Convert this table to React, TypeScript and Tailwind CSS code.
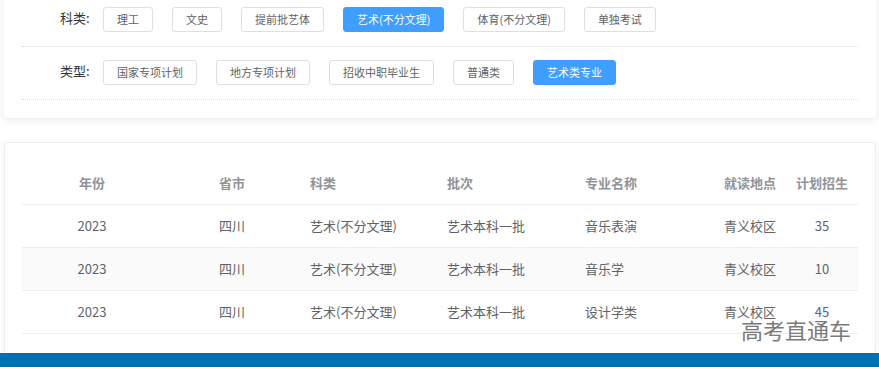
// Plan table page: filter card (subject / plan type) above a striped
// enrolment table, with the site footer strip peeking in at the bottom.

const SUBJECTS = ['理工', '文史', '提前批艺体', '艺术(不分文理)', '体育(不分文理)', '单独考试'];
const PLAN_TYPES = ['国家专项计划', '地方专项计划', '招收中职毕业生', '普通类', '艺术类专业'];

const ROWS = [
  { year: '2023', prov: '四川', subject: '艺术(不分文理)', batch: '艺术本科一批', major: '音乐表演', campus: '青义校区', plan: '35' },
  { year: '2023', prov: '四川', subject: '艺术(不分文理)', batch: '艺术本科一批', major: '音乐学', campus: '青义校区', plan: '10' },
  { year: '2023', prov: '四川', subject: '艺术(不分文理)', batch: '艺术本科一批', major: '设计学类', campus: '青义校区', plan: '45' },
];

const COLS = 'grid grid-cols-[187px_91px_137px_138px_139px_72px_72px]';

function FilterRow({ label, items, active }: { label: string; items: string[]; active: string }) {
  return (
    <div className="flex items-start border-b border-dotted border-[#dcdcdc] pt-[13px] pb-[14px]">
      <div className="w-[81px] flex-none pl-[38px] pt-[1px] text-[13px] leading-[20px] text-[#333]">{label}:</div>
      <div className="flex flex-wrap gap-[19px]">
        {items.map((it) => (
          <button
            key={it}
            className={
              it === active
                ? 'h-[25px] rounded-[3px] border border-[#409eff] bg-[#409eff] px-[13px] text-[11px] leading-[23px] text-white'
                : 'h-[25px] rounded-[3px] border border-[#dcdfe6] bg-white px-[13px] text-[11px] leading-[23px] text-[#606266]'
            }
          >
            {it}
          </button>
        ))}
      </div>
    </div>
  );
}

export default function App() {
  return (
    <div
      className="relative h-[367px] overflow-hidden bg-white"
      style={{ fontFamily: '"Noto Sans CJK SC", "Noto Sans", sans-serif' }}
    >
      {/* filter card — its top sits above the visible area */}
      <div className="mx-[4px] mr-[3px] -mt-[6px] rounded-b-[4px] bg-white px-[18px] pb-[18px] shadow-[0_2px_10px_rgba(0,0,0,0.09)]">
        <FilterRow label="科类" items={SUBJECTS} active="艺术(不分文理)" />
        <FilterRow label="类型" items={PLAN_TYPES} active="艺术类专业" />
      </div>

      {/* table card */}
      <div className="mx-[4px] mr-[3px] mt-[24px] h-[211px] rounded-t-[4px] border border-b-0 border-[#ebeef5] bg-white px-[17px] pt-[18px] shadow-[0_2px_10px_rgba(0,0,0,0.06)]">
        <div className={`${COLS} h-[44px] items-center border-b border-[#ebeef5] text-[13px] font-bold text-[#909399]`}>
          <div className="pr-[47px] text-center">年份</div>
          <div className="pl-[10px]">省市</div>
          <div className="pl-[10px]">科类</div>
          <div className="pl-[10px]">批次</div>
          <div className="pl-[10px]">专业名称</div>
          <div className="pl-[10px]">就读地点</div>
          <div className="text-center">计划招生</div>
        </div>
        {ROWS.map((r, i) => (
          <div
            key={i}
            className={`${COLS} h-[43px] items-center border-b border-[#ebeef5] text-[13px] text-[#606266] ${i % 2 === 1 ? 'bg-[#fafafa]' : 'bg-white'}`}
          >
            <div className="pr-[47px] text-center">{r.year}</div>
            <div className="pl-[10px]">{r.prov}</div>
            <div className="pl-[10px]">{r.subject}</div>
            <div className="pl-[10px]">{r.batch}</div>
            <div className="pl-[10px]">{r.major}</div>
            <div className="pl-[10px]">{r.campus}</div>
            <div className="text-center">{r.plan}</div>
          </div>
        ))}
      </div>

      {/* footer strip */}
      <div className="h-[14px] bg-[#0071b3]" />

      {/* watermark */}
      <div className="absolute left-[741px] top-[315px] text-[22px] leading-[28px] text-[#7a7a7a] [text-shadow:0_0_2px_#fff,0_0_2px_#fff]">
        高考直通车
      </div>
    </div>
  );
}
